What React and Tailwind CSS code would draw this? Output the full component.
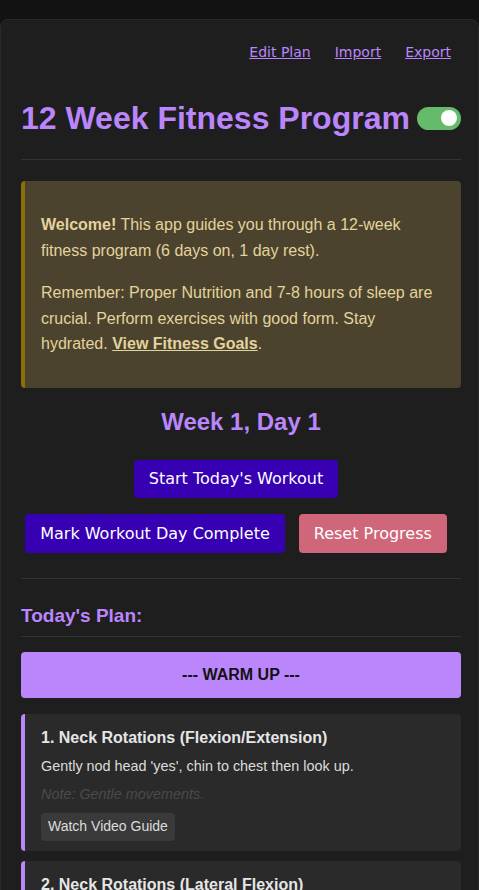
import React, { useState } from 'react';

// 12 week fitness program - dashboard view
const exercises = [
  {
    id: 1,
    name: '1. Neck Rotations (Flexion/Extension)',
    desc: "Gently nod head 'yes', chin to chest then look up.",
    note: 'Note: Gentle movements.',
  },
  {
    id: 2,
    name: '2. Neck Rotations (Lateral Flexion)',
    desc: 'Tilt ear toward shoulder, alternating sides.',
    note: 'Note: Do not force the stretch.',
  },
];

export default function App() {
  const [dark, setDark] = useState(true);

  return (
    <div className="min-h-screen bg-[#121212] pt-[19px] font-['Liberation_Sans',Arial,sans-serif]">
      <div className="rounded-lg border border-[#2a2a2a] bg-[#1e1e1e] pl-5 pr-[17px] pb-10">
        {/* top links */}
        <div className="flex justify-end gap-[24px] pr-[10px] pt-[24px] font-['DejaVu_Sans',sans-serif] text-[14px] leading-[17px] text-[#bb86fc]">
          <a href="#" className="underline">Edit Plan</a>
          <a href="#" className="underline">Import</a>
          <a href="#" className="underline">Export</a>
        </div>

        {/* header */}
        <div className="mt-[39px] flex items-center justify-between border-b border-[#333] pb-[23px]">
          <h1 className="text-[32px] font-bold leading-[36px] text-[#bb86fc]">12 Week Fitness Program</h1>
          <button
            onClick={() => setDark(!dark)}
            className="flex h-[23px] w-[44px] items-center justify-end rounded-full bg-[#66bb6a] px-[4px]"
          >
            <span className="block h-[16px] w-[16px] rounded-full bg-white" />
          </button>
        </div>

        {/* welcome box */}
        <div className="mt-[21px] rounded border-l-4 border-[#8b6d0c] bg-[#4b432d] px-4 py-[15px] text-[16px] text-[#e3d39c]">
          <p className="my-4 leading-[26px]">
            <strong>Welcome!</strong> This app guides you through a 12-week fitness program (6 days on, 1 day rest).
          </p>
          <p className="my-4 leading-[25.5px]">
            Remember: Proper Nutrition and 7-8 hours of sleep are crucial. Perform exercises with good form. Stay hydrated.{' '}
            <a href="#" className="font-bold underline">View Fitness Goals</a>.
          </p>
        </div>

        <h2 className="mt-[20px] text-center text-[24px] font-bold leading-[28px] text-[#bb86fc]">Week 1, Day 1</h2>

        {/* action buttons */}
        <div className="mt-[24px] flex flex-col items-center gap-[16px] pr-[10px] font-['DejaVu_Sans',sans-serif] text-[16px] text-white">
          <button className="rounded bg-[#3700b3] px-[15px] py-[9.5px] leading-[19px]">Start Today's Workout</button>
          <div className="flex gap-[14px]">
            <button className="rounded bg-[#3700b3] px-[15px] py-[10px] leading-[19px]">Mark Workout Day Complete</button>
            <button className="rounded bg-[#cf6679] px-[15px] py-[10px] leading-[19px]">Reset Progress</button>
          </div>
        </div>

        <div className="mt-[25px] border-t border-[#333]" />

        {/* plan */}
        <h3 className="mt-[26px] border-b border-[#333] pb-[9px] text-[19px] font-bold leading-[22px] text-[#bb86fc]">Today's Plan:</h3>

        <div className="mt-[15px] rounded bg-[#bb86fc] py-[13.5px] text-center text-[16px] font-bold leading-[19px] text-[#121212]">
          --- WARM UP ---
        </div>

        <div className="mt-[16px] flex flex-col gap-[10px]">
          {exercises.map((ex) => (
            <div key={ex.id} className="rounded border-l-4 border-[#bb86fc] bg-[#2a2a2a] px-4 pt-[14px] pb-[10px]">
              <div className="text-[16px] font-bold leading-[19px] text-[#e6e6e6]">{ex.name}</div>
              <p className="mt-[11px] text-[14.4px] leading-[17px] text-[#dcdcdc]">{ex.desc}</p>
              <p className="mt-[11px] text-[14.4px] italic leading-[17px] text-[#4a4a4a]">{ex.note}</p>
              <button className="mt-[10px] rounded bg-[#3a3a3a] px-[7px] py-[5.5px] text-[14px] leading-[17px] text-[#dcdcdc]">
                Watch Video Guide
              </button>
            </div>
          ))}
        </div>
      </div>
    </div>
  );
}
